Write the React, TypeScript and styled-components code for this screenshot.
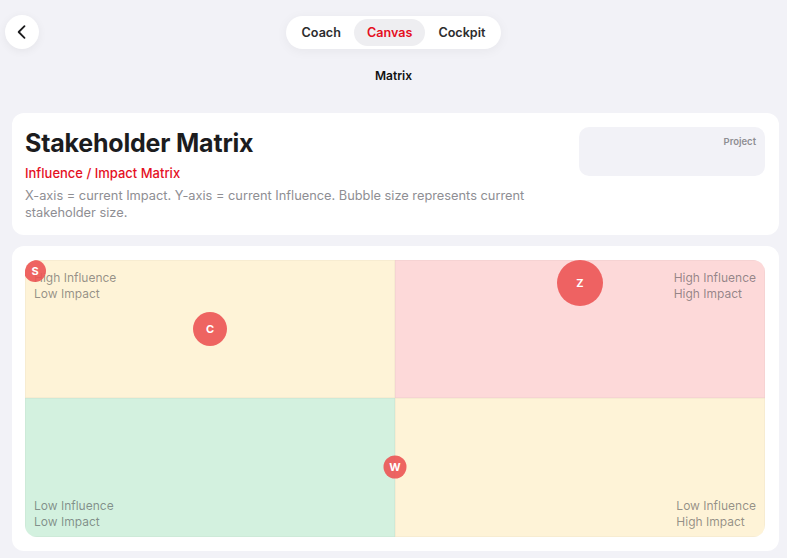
import styled, { createGlobalStyle } from 'styled-components';

type Stakeholder = {
  id: string;
  impact: number; // 0..100, left to right
  influence: number; // 0..100, bottom to top
  size: number;
};

const stakeholders: Stakeholder[] = [
  { id: 'S', impact: 1.35, influence: 96, size: 22 },
  { id: 'C', impact: 25, influence: 75.1, size: 34 },
  { id: 'Z', impact: 75, influence: 91.7, size: 46 },
  { id: 'W', impact: 50, influence: 25.3, size: 23 },
];

type Tone = 'amber' | 'rose' | 'mint';

const quadrants: { tone: Tone; lines: string[]; align: 'left' | 'right'; bottom?: boolean }[] = [
  { tone: 'amber', lines: ['High Influence', 'Low Impact'], align: 'left' },
  { tone: 'rose', lines: ['High Influence', 'High Impact'], align: 'right' },
  { tone: 'mint', lines: ['Low Influence', 'Low Impact'], align: 'left', bottom: true },
  { tone: 'amber', lines: ['Low Influence', 'High Impact'], align: 'right', bottom: true },
];

const tones: Record<Tone, string> = {
  amber: '#fef3d7',
  rose: '#fdd9d9',
  mint: '#d3f1df',
};

const GlobalStyle = createGlobalStyle`
  html, body {
    margin: 0;
    padding: 0;
    background: #f2f2f7;
    font-family: Inter, 'Noto Sans', 'Liberation Sans', sans-serif;
    -webkit-font-smoothing: antialiased;
  }
`;

const App = () => {
  return (
    <>
      <GlobalStyle />
      <Page>
        <TopBar>
          <BackButton aria-label='Back'>
            <svg width='20' height='20' viewBox='0 0 24 24' fill='none'>
              <path
                d='M15 5l-7 7 7 7'
                stroke='#1c1c1e'
                strokeWidth='2.2'
                strokeLinecap='round'
                strokeLinejoin='round'
              />
            </svg>
          </BackButton>
          <Segmented>
            <Segment>Coach</Segment>
            <Segment $active>Canvas</Segment>
            <Segment>Cockpit</Segment>
          </Segmented>
        </TopBar>
        <PageTitle>Matrix</PageTitle>

        <HeaderCard>
          <HeaderText>
            <Title>Stakeholder Matrix</Title>
            <Subtitle>Influence / Impact Matrix</Subtitle>
            <Description>
              X-axis = current Impact. Y-axis = current Influence. Bubble size represents current
              stakeholder size.
            </Description>
          </HeaderText>
          <ProjectBox>
            <ProjectLabel>Project</ProjectLabel>
          </ProjectBox>
        </HeaderCard>

        <MatrixCard>
          <Grid>
            {quadrants.map((q, index) => (
              <Quadrant key={index} $tone={q.tone} $align={q.align} $bottom={q.bottom}>
                <QuadrantLabel>
                  {q.lines.map((line) => (
                    <div key={line}>{line}</div>
                  ))}
                </QuadrantLabel>
              </Quadrant>
            ))}
            {stakeholders.map((s) => (
              <Bubble
                key={s.id}
                style={{
                  left: `${s.impact}%`,
                  top: `${100 - s.influence}%`,
                  width: s.size,
                  height: s.size,
                }}
              >
                {s.id.toLowerCase()}
              </Bubble>
            ))}
          </Grid>
        </MatrixCard>
      </Page>
    </>
  );
};

export default App;

const Page = styled.div`
  width: 787px;
  min-height: 558px;
  display: flex;
  flex-direction: column;
  padding: 15px 8px 0 12px;
  box-sizing: border-box;
`;

const TopBar = styled.div`
  position: relative;
  height: 34px;
  display: flex;
  justify-content: center;
  align-items: center;
  margin-right: 4px;
`;

const BackButton = styled.button`
  position: absolute;
  left: -7px;
  top: 0;
  width: 34px;
  height: 34px;
  border-radius: 50%;
  border: none;
  background: #ffffff;
  box-shadow: 0 2px 10px rgba(0, 0, 0, 0.06);
  display: flex;
  align-items: center;
  justify-content: center;
  padding: 0;
  cursor: pointer;
`;

const Segmented = styled.div`
  display: flex;
  align-items: center;
  height: 33px;
  padding: 0 3px;
  border-radius: 17px;
  background: #ffffff;
  box-shadow: 0 2px 12px rgba(0, 0, 0, 0.05);
  margin-top: 1px;
`;

const Segment = styled.div<{ $active?: boolean }>`
  height: 27px;
  padding: 0 13px;
  border-radius: 14px;
  display: flex;
  align-items: center;
  font-size: 12.6px;
  font-weight: 600;
  color: ${(p) => (p.$active ? '#e5101f' : '#2c2c2e')};
  background: ${(p) => (p.$active ? '#eeeef1' : 'transparent')};
`;

const PageTitle = styled.div`
  margin-top: 19px;
  text-align: center;
  font-size: 12px;
  font-weight: 600;
  color: #111111;
  margin-right: 4px;
`;

const HeaderCard = styled.div`
  margin-top: 30px;
  width: 767px;
  box-sizing: border-box;
  background: #ffffff;
  border-radius: 12px;
  padding: 15px 14px 14px 13px;
  display: flex;
  justify-content: space-between;
  align-items: flex-start;
`;

const HeaderText = styled.div`
  display: flex;
  flex-direction: column;
  width: 530px;
`;

const Title = styled.div`
  font-size: 25px;
  font-weight: 700;
  line-height: 31px;
  color: #1c1c1e;
  letter-spacing: -0.2px;
`;

const Subtitle = styled.div`
  margin-top: 5px;
  font-size: 13px;
  font-weight: 500;
  line-height: 18px;
  color: #e5101f;
`;

const Description = styled.div`
  margin-top: 5px;
  font-size: 12.8px;
  line-height: 17px;
  color: #8e8e93;
`;

const ProjectBox = styled.div`
  width: 186px;
  height: 49px;
  box-sizing: border-box;
  border-radius: 10px;
  background: #f2f2f7;
  padding: 9px 9px 0 0;
  display: flex;
  justify-content: flex-end;
  align-items: flex-start;
  margin-top: -1px;
`;

const ProjectLabel = styled.div`
  font-size: 9.5px;
  font-weight: 600;
  color: #8e8e93;
`;

const MatrixCard = styled.div`
  margin-top: 11px;
  width: 767px;
  box-sizing: border-box;
  background: #ffffff;
  border-radius: 12px;
  padding: 14px 14px 14px 13px;
`;

const Grid = styled.div`
  position: relative;
  display: grid;
  grid-template-columns: 1fr 1fr;
  grid-template-rows: 138px 139px;
  border-radius: 12px;
  overflow: hidden;
  box-shadow: inset 0 0 0 1px rgba(0, 0, 0, 0.03);
`;

const Quadrant = styled.div<{ $tone: Tone; $align: 'left' | 'right'; $bottom?: boolean }>`
  background: ${(p) => tones[p.$tone]};
  display: flex;
  justify-content: ${(p) => (p.$align === 'left' ? 'flex-start' : 'flex-end')};
  align-items: ${(p) => (p.$bottom ? 'flex-end' : 'flex-start')};
  padding: ${(p) => (p.$bottom ? '0 9px 8px 9px' : '10px 9px 0 9px')};
  box-shadow: inset 0 0 0 0.5px rgba(0, 0, 0, 0.06);
`;

const QuadrantLabel = styled.div`
  font-size: 12px;
  line-height: 15.5px;
  color: rgba(60, 60, 67, 0.55);
`;

const Bubble = styled.div`
  position: absolute;
  transform: translate(-50%, -50%);
  border-radius: 50%;
  background: rgba(236, 84, 84, 0.9);
  color: #ffffff;
  font-size: 11px;
  font-weight: 700;
  display: flex;
  align-items: center;
  justify-content: center;
  text-transform: uppercase;
`;
